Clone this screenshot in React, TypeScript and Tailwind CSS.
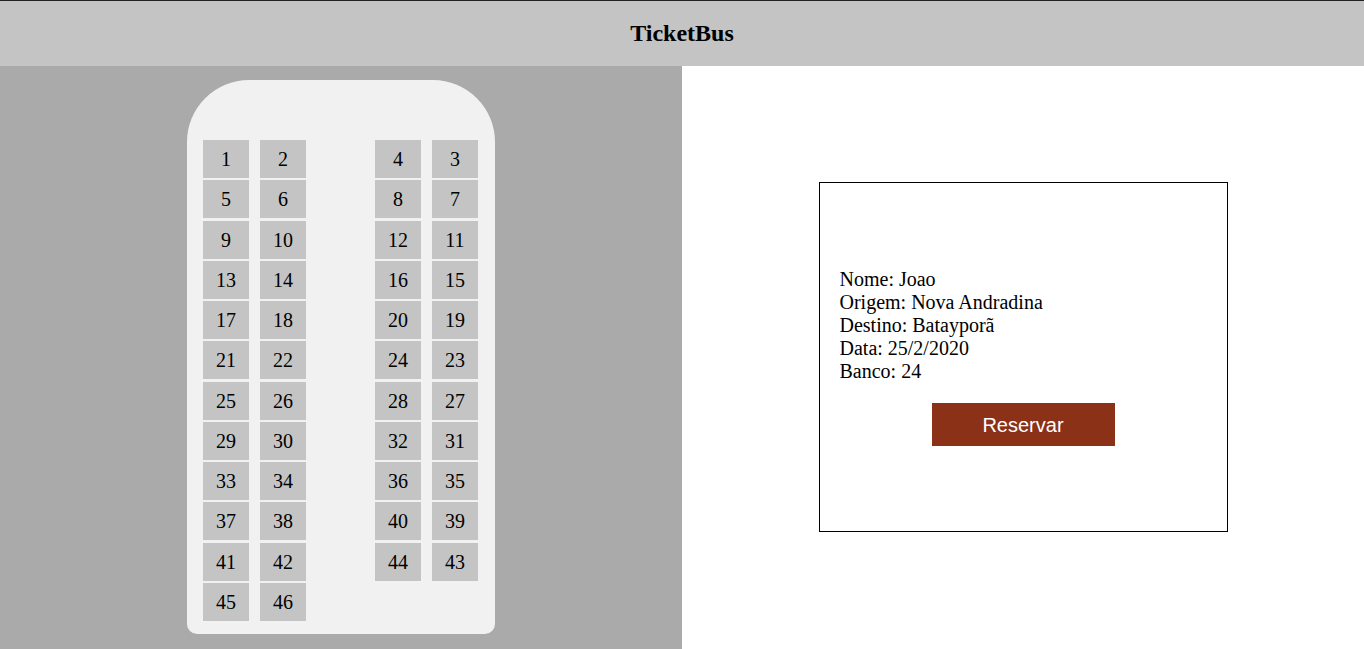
const rows: (number | null)[][] = [];
for (let r = 0; r < 11; r++) {
  const b = r * 4;
  rows.push([b + 1, b + 2, b + 4, b + 3]);
}
rows.push([45, 46, null, null]);

function Seat({ n }: { n: number | null }) {
  if (n === null) return <div className="w-[46px] h-[38px]" />;
  return (
    <div className="w-[46px] h-[38px] bg-[#c4c4c4] flex items-center justify-center text-[20px] text-black">
      {n}
    </div>
  );
}

export default function App() {
  return (
    <div className="h-screen flex flex-col font-['Liberation_Serif',serif]">
      <header className="h-[66px] shrink-0 bg-[#c4c4c4] border-t border-[#1f2322] flex items-center justify-center pb-[2px]">
        <h1 className="text-[24px] font-bold text-black">TicketBus</h1>
      </header>
      <main className="flex flex-1">
        <section className="w-1/2 bg-[#aaaaaa] flex justify-center items-start pt-[14px]">
          <div className="w-[308px] bg-[#f1f1f1] rounded-t-[62px] rounded-b-[10px] pt-[60px] pb-[13px] pl-4 pr-[17px] flex flex-col gap-y-[2.25px]">
            {rows.map((row, i) => (
              <div key={i} className="flex">
                <Seat n={row[0]} />
                <div className="w-[11px]" />
                <Seat n={row[1]} />
                <div className="w-[69px]" />
                <Seat n={row[2]} />
                <div className="w-[11px]" />
                <Seat n={row[3]} />
              </div>
            ))}
          </div>
        </section>
        <section className="w-1/2 bg-white flex items-start justify-center pt-[116px]">
          <div className="w-[409px] h-[350px] border border-black flex flex-col justify-center px-5">
            <div className="text-[20px] leading-[23px] text-black">
              <p>Nome: Joao</p>
              <p>Origem: Nova Andradina</p>
              <p>Destino: Batayporã</p>
              <p>Data: 25/2/2020</p>
              <p>Banco: 24</p>
            </div>
            <div className="flex justify-center mt-5">
              <button className="w-[183px] h-[43px] bg-[#8b3118] text-white text-[20px] font-['Liberation_Sans',sans-serif]">
                Reservar
              </button>
            </div>
          </div>
        </section>
      </main>
    </div>
  );
}
